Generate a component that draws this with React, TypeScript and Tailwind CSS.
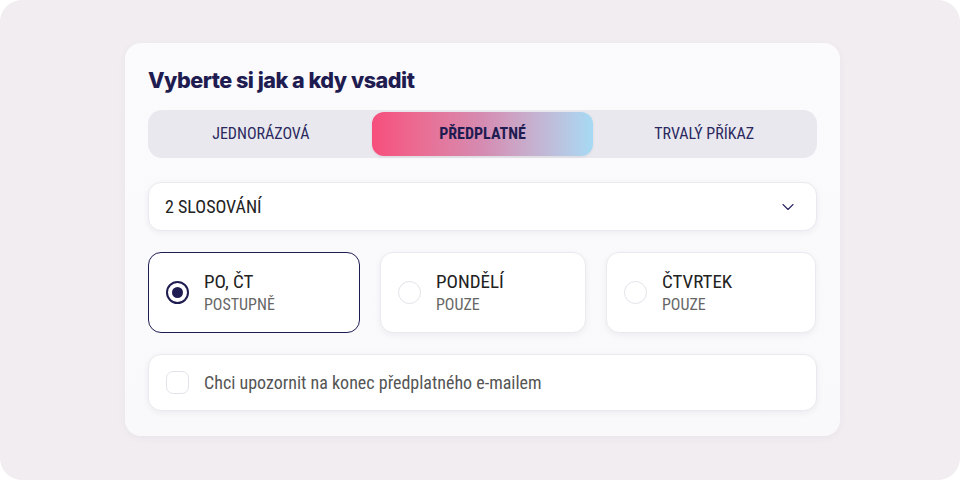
import { ChevronDown } from 'lucide-react';

const cond = { fontFamily: '"Roboto Condensed", Roboto, sans-serif' };

type Opt = { title: string; sub: string; active?: boolean };

const options: Opt[] = [
  { title: 'PO, ČT', sub: 'POSTUPNĚ', active: true },
  { title: 'PONDĚLÍ', sub: 'POUZE' },
  { title: 'ČTVRTEK', sub: 'POUZE' },
];

export default function App() {
  return (
    <div className="w-[960px] h-[480px] bg-white">
      <div className="w-full h-full rounded-[22px] bg-[#f1edf1] pt-[43px] pl-[125px]">
        <div className="w-[715px] h-[393px] rounded-[16px] bg-gradient-to-b from-[#fbfafc] to-[#f9f8fa] shadow-[0_2px_10px_rgba(40,30,80,0.04)] px-[23px] pt-[23px]">
          <h1
            className="text-[21.6px] leading-[28px] font-bold text-[#1f1c52] tracking-[-0.5px]"
            style={{ fontFamily: 'Inter, Lato, sans-serif', fontWeight: 800 }}
          >
            Vyberte si jak a kdy vsadit
          </h1>

          <div className="mt-[16px] h-[48px] rounded-[14px] bg-[#e9e8ee] grid grid-cols-3 p-[2px]" style={cond}>
            <button className="text-[16px] text-[#2b2860]">JEDNORÁZOVÁ</button>
            <button className="rounded-[12px] text-[16px] font-bold text-[#1f1c52] bg-gradient-to-r from-[#f74d7c] via-[#d58bb1] to-[#a6daf4] shadow-[0_1px_3px_rgba(0,0,0,0.08)]">
              PŘEDPLATNÉ
            </button>
            <button className="text-[16px] text-[#2b2860]">TRVALÝ PŘÍKAZ</button>
          </div>

          <div
            className="mt-[24px] h-[49px] rounded-[13px] bg-white border border-[#ebe9ef] shadow-[0_2px_6px_rgba(40,30,80,0.06)] flex items-center justify-between pl-[16px] pr-[18px]"
            style={cond}
          >
            <span className="text-[18px] text-[#222]">2 SLOSOVÁNÍ</span>
            <ChevronDown className="w-[20px] h-[20px] text-[#2a2760]" strokeWidth={1.3} />
          </div>

          <div className="mt-[21px] flex gap-[20px]" style={cond}>
            {options.map((o, i) => (
              <div
                key={o.title}
                className={
                  'h-[81px] rounded-[13px] bg-white flex items-center gap-[15px] px-[17px] ' +
                  (o.active
                    ? 'border border-[#1f1c52]'
                    : 'border border-[#ebe9ef] shadow-[0_2px_6px_rgba(40,30,80,0.06)]') +
                  (i === 0 ? ' w-[212px]' : i === 1 ? ' w-[206px]' : ' w-[210px]')
                }
              >
                {o.active ? (
                  <span className="w-[23px] h-[23px] rounded-full border-2 border-[#1f1c52] flex items-center justify-center shrink-0">
                    <span className="w-[11px] h-[11px] rounded-full bg-[#1f1c52]" />
                  </span>
                ) : (
                  <span className="w-[23px] h-[23px] rounded-full border border-[#e4e2e8] shrink-0" />
                )}
                <div className="flex flex-col">
                  <span className="text-[19px] leading-[23px] text-[#222]">{o.title}</span>
                  <span className="text-[16px] leading-[23px] text-[#666]">{o.sub}</span>
                </div>
              </div>
            ))}
          </div>

          <div
            className="mt-[21px] h-[57px] rounded-[13px] bg-white border border-[#ebe9ef] shadow-[0_2px_6px_rgba(40,30,80,0.06)] flex items-center gap-[15px] px-[17px]"
            style={cond}
          >
            <span className="w-[23px] h-[23px] rounded-[7px] border border-[#e4e2e8]" />
            <span className="text-[18px] text-[#555]">Chci upozornit na konec předplatného e-mailem</span>
          </div>
        </div>
      </div>
    </div>
  );
}
